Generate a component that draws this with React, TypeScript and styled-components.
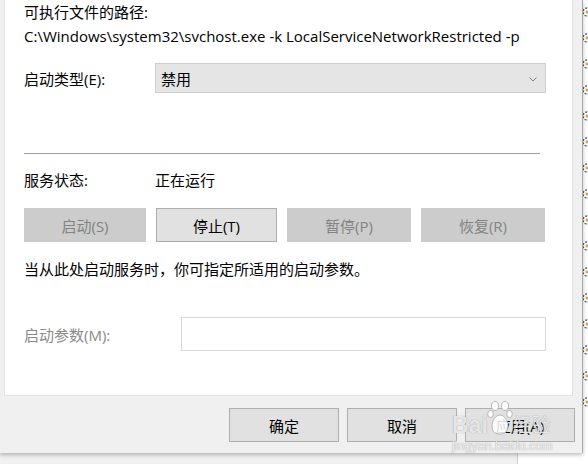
import React from "react";
import styled, { createGlobalStyle } from "styled-components";

const GlobalStyle = createGlobalStyle`
  html, body {
    margin: 0;
    padding: 0;
    background: #ffffff;
  }
  body {
    font-family: "Open Sans", "Noto Sans CJK SC", sans-serif;
    font-size: 15px;
    color: #000000;
  }
`;

const actionButtons = [
  { label: "启动(S)", disabled: true },
  { label: "停止(T)", disabled: false },
  { label: "暂停(P)", disabled: true },
  { label: "恢复(R)", disabled: true },
];

const iconRows = Array.from({ length: 16 });

const App: React.FC = () => {
  return (
    <>
      <GlobalStyle />
      <Screen>
        <Dialog>
          <Panel>
            <Label>可执行文件的路径:</Label>
            <PathText>C:\Windows\system32\svchost.exe -k LocalServiceNetworkRestricted -p</PathText>

            <FieldRow $top={15}>
              <FieldLabel>启动类型(E):</FieldLabel>
              <Combo>
                <span>禁用</span>
                <svg width="8" height="5" viewBox="0 0 8 5">
                  <polyline points="0.5,0.5 4,4 7.5,0.5" fill="none" stroke="#808080" strokeWidth="1" />
                </svg>
              </Combo>
            </FieldRow>

            <Separator />

            <StatusRow>
              <FieldLabel>服务状态:</FieldLabel>
              <span>正在运行</span>
            </StatusRow>

            <ButtonGrid>
              {actionButtons.map((b) => (
                <ActionButton key={b.label} $disabled={b.disabled}>
                  {b.label}
                </ActionButton>
              ))}
            </ButtonGrid>

            <Hint>当从此处启动服务时，你可指定所适用的启动参数。</Hint>

            <FieldRow $top={36}>
              <FieldLabel $muted $width={157}>启动参数(M):</FieldLabel>
              <ParamInput />
            </FieldRow>
          </Panel>

          <Footer>
            <FooterButton>确定</FooterButton>
            <FooterButton>取消</FooterButton>
            <FooterButton>应用(A)</FooterButton>
          </Footer>

          <Watermark>
            <WatermarkMain>
              <span>Bai</span>
              <svg width="26" height="36" viewBox="0 0 26 36">
                <g fill="rgba(255,255,255,0.85)" stroke="rgba(170,170,170,0.8)" strokeWidth="1">
                  <ellipse cx="8" cy="6" rx="3.5" ry="4.5" />
                  <ellipse cx="18" cy="6" rx="3.5" ry="4.5" />
                  <ellipse cx="3.5" cy="14" rx="2.8" ry="3.6" />
                  <ellipse cx="22.5" cy="14" rx="2.8" ry="3.6" />
                  <path d="M13 15 C7 15 3 25 6 31 C8 35 18 35 20 31 C23 25 19 15 13 15 Z" />
                </g>
              </svg>
              <WatermarkCjk>经验</WatermarkCjk>
            </WatermarkMain>
            <WatermarkSub>jingyan.baidu.com</WatermarkSub>
          </Watermark>
        </Dialog>

        <BackStrip>
          {iconRows.map((_, i) => (
            <svg key={i} width="14" height="14" viewBox="0 0 14 14">
              <circle cx="7" cy="7" r="4" fill="none" stroke="#5a5a5a" strokeWidth="1.4" strokeDasharray="2 1.3" />
              <circle cx="7" cy="7" r="1.4" fill="#c9a44a" />
            </svg>
          ))}
        </BackStrip>

        <BackBottom>
          <BackColumn />
        </BackBottom>
      </Screen>
    </>
  );
};

export default App;

const Screen = styled.div`
  width: 588px;
  height: 464px;
  overflow: hidden;
  display: grid;
  grid-template-columns: 583px 5px;
  grid-template-rows: 453px 11px;
  background: #ffffff;
`;

const Dialog = styled.div`
  position: relative;
  background: #f0f0f0;
  border-right: 1px solid #a8a8a8;
  box-shadow: 0 2px 4px rgba(0, 0, 0, 0.25);
  padding-left: 4px;
  display: flex;
  flex-direction: column;
  z-index: 1;
`;

const Panel = styled.div`
  width: 569px;
  height: 396px;
  box-sizing: border-box;
  background: #ffffff;
  border: 1px solid #e3e3e3;
  border-top: none;
  padding: 0 26px 0 19px;
  display: flex;
  flex-direction: column;
`;

const Label = styled.div`
  line-height: 24px;
`;

const PathText = styled.div`
  line-height: 24px;
  white-space: nowrap;
`;

const FieldRow = styled.div<{ $top: number }>`
  display: flex;
  align-items: center;
  margin-top: ${({ $top }) => $top}px;
`;

const FieldLabel = styled.span<{ $muted?: boolean; $width?: number }>`
  width: ${({ $width }) => $width ?? 131}px;
  flex-shrink: 0;
  color: ${({ $muted }) => ($muted ? "#8a8a8a" : "#000000")};
`;

const Combo = styled.div`
  flex: 1;
  height: 30px;
  box-sizing: border-box;
  background: #e5e5e5;
  border: 1px solid #cfcfcf;
  display: flex;
  align-items: center;
  justify-content: space-between;
  padding: 0 8px 0 5px;

  svg {
    margin-top: 2px;
  }
`;

const Separator = styled.div`
  height: 1px;
  background: #a0a0a0;
  margin: 60px 6px 0 0;
`;

const StatusRow = styled.div`
  display: flex;
  align-items: center;
  line-height: 24px;
  margin-top: 14px;
`;

const ButtonGrid = styled.div`
  display: grid;
  grid-template-columns: 122px 121px 124px 1fr;
  column-gap: 10px;
  margin-top: 16px;
  margin-right: 1px;
`;

const ActionButton = styled.div<{ $disabled?: boolean }>`
  height: 34px;
  box-sizing: border-box;
  display: flex;
  align-items: center;
  justify-content: center;
  background: ${({ $disabled }) => ($disabled ? "#cccccc" : "#e1e1e1")};
  border: 1px solid ${({ $disabled }) => ($disabled ? "#cccccc" : "#adadad")};
  color: ${({ $disabled }) => ($disabled ? "#838383" : "#000000")};
`;

const Hint = styled.div`
  line-height: 24px;
  margin-top: 15px;
`;

const ParamInput = styled.div`
  flex: 1;
  height: 34px;
  box-sizing: border-box;
  background: #ffffff;
  border: 1px solid #d9d9d9;
`;

const Footer = styled.div`
  display: flex;
  justify-content: flex-end;
  gap: 8px;
  margin-top: 12px;
  padding-right: 7px;
`;

const FooterButton = styled.div`
  width: 110px;
  height: 34px;
  box-sizing: border-box;
  display: flex;
  align-items: center;
  justify-content: center;
  background: #e1e1e1;
  border: 1px solid #adadad;
`;

const Watermark = styled.div`
  position: absolute;
  left: 452px;
  top: 400px;
  display: flex;
  flex-direction: column;
  align-items: flex-start;
  white-space: nowrap;
  pointer-events: none;
`;

const WatermarkMain = styled.div`
  display: flex;
  align-items: flex-end;
  height: 38px;
  font-family: "Liberation Sans", "Noto Sans CJK SC", sans-serif;
  font-size: 23px;
  font-weight: bold;
  line-height: 26px;
  color: rgba(255, 255, 255, 0.8);
  text-shadow: 0 0 1px rgba(130, 130, 130, 0.95);

  svg {
    margin: 0 0 2px -1px;
  }
`;

const WatermarkCjk = styled.span`
  font-size: 19px;
  line-height: 24px;
  font-weight: normal;
`;

const WatermarkSub = styled.div`
  font-family: "Liberation Sans", sans-serif;
  font-size: 12.5px;
  line-height: 14px;
  margin-top: 1px;
  color: rgba(255, 255, 255, 0.85);
  text-shadow: 0 0 1px rgba(130, 130, 130, 0.95);
`;

const BackStrip = styled.div`
  grid-row: 1 / 3;
  grid-column: 2;
  background: #ffffff;
  overflow: hidden;
  display: flex;
  flex-direction: column;
  gap: 12px;
  padding-top: 5px;
  svg {
    flex-shrink: 0;
    margin-left: -3px;
  }
`;

const BackBottom = styled.div`
  grid-row: 2;
  grid-column: 1;
  background: #f0f0f0;
  display: flex;
  padding-left: 517px;
`;

const BackColumn = styled.div`
  flex: 1;
  background: #ffffff;
  border-left: 1px solid #d0d0d0;
`;
